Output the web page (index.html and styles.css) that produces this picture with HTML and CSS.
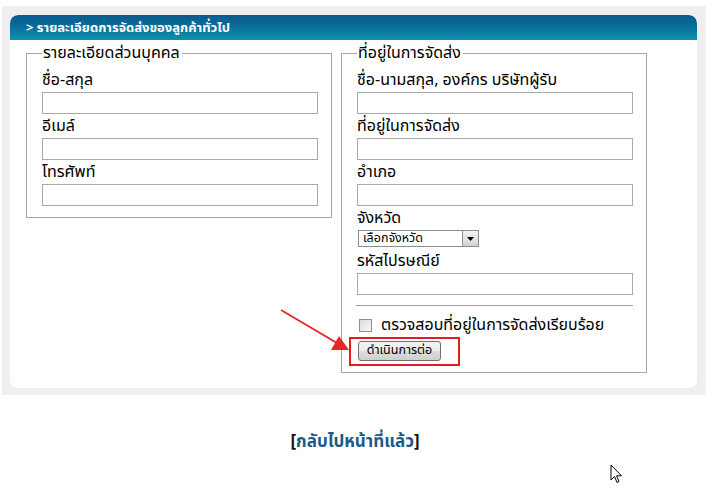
FILE: index.html
```html
<!DOCTYPE html>
<html lang="th">
<head>
<meta charset="utf-8">
<title>รายละเอียดการจัดส่ง</title>
<link rel="stylesheet" href="styles.css">
</head>
<body>
<div class="outer">
  <div class="panel">
    <div class="panel-head">&gt; รายละเอียดการจัดส่งของลูกค้าทั่วไป</div>
    <div class="panel-body">
      <fieldset class="box">
        <legend>รายละเอียดส่วนบุคคล</legend>
        <label class="lbl">ชื่อ-สกุล</label>
        <input class="txt" type="text">
        <label class="lbl">อีเมล์</label>
        <input class="txt" type="text">
        <label class="lbl">โทรศัพท์</label>
        <input class="txt" type="text">
      </fieldset>
      <fieldset class="box box-right">
        <legend>ที่อยู่ในการจัดส่ง</legend>
        <label class="lbl">ชื่อ-นามสกุล, องค์กร บริษัทผู้รับ</label>
        <input class="txt" type="text">
        <label class="lbl">ที่อยู่ในการจัดส่ง</label>
        <input class="txt" type="text">
        <label class="lbl">อำเภอ</label>
        <input class="txt" type="text">
        <label class="lbl">จังหวัด</label>
        <div class="select">
          <span class="select-text">เลือกจังหวัด</span>
          <span class="select-btn"><svg width="7" height="4" viewBox="0 0 7 4"><path d="M0 0H7L3.5 4Z" fill="#000"/></svg></span>
        </div>
        <label class="lbl">รหัสไปรษณีย์</label>
        <input class="txt" type="text">
        <div class="rule"></div>
        <div class="check-row">
          <span class="check"></span>
          <span class="check-text">ตรวจสอบที่อยู่ในการจัดส่งเรียบร้อย</span>
        </div>
        <div class="highlight"><span class="btn">ดำเนินการต่อ</span></div>
      </fieldset>
    </div>
  </div>
</div>
<div class="back"><span class="bracket">[</span>กลับไปหน้าที่แล้ว<span class="bracket">]</span></div>
<svg class="arrow" width="80" height="50" viewBox="0 0 80 50">
  <line x1="2" y1="2" x2="58" y2="35" stroke="#e8262a" stroke-width="2"/>
  <path d="M70 42 L52 42 L60 28 Z" fill="#e8262a"/>
</svg>
<svg class="cursor" width="13" height="21" viewBox="0 0 13 21">
  <path d="M1 1 L1 16 L4.5 12.5 L7 18.5 L9 17.6 L6.6 11.8 L11.5 11.8 Z" fill="#fff" stroke="#000" stroke-width="1" stroke-linejoin="round"/>
</svg>
</body>
</html>
```
FILE: styles.css
```css
html, body {
  margin: 0;
  padding: 0;
  background: #ffffff;
  font-family: Tahoma, "Noto Sans Thai", "Noto Sans", "DejaVu Sans", sans-serif;
  color: #000;
}
body {
  position: relative;
  width: 710px;
  height: 503px;
  overflow: hidden;
}
.outer {
  margin: 6px 4px 0 2px;
  padding: 9px 9px 7px 8px;
  background: #efefef;
}
.panel {
  background: #ffffff;
  border-radius: 8px;
  overflow: hidden;
}
.panel-head {
  height: 25px;
  line-height: 26px;
  padding-left: 16px;
  color: #ffffff;
  font-size: 13px;
  font-weight: bold;
  background: linear-gradient(#0a5b8d 0%, #0b6f9c 50%, #0f92ae 100%);
  border-radius: 8px 8px 0 0;
}
.panel-body {
  display: flex;
  align-items: flex-start;
  gap: 9px;
  padding: 4px 16px 15px 16px;
}
.box {
  width: 306px;
  box-sizing: border-box;
  margin: 0;
  padding: 0 14px 6px 15px;
  border: 1px solid #a6a6a6;
  min-width: 0;
}
.box:first-child {
  padding-bottom: 11px;
}
.box legend {
  font-size: 16px;
  padding: 0 2px 0 1px;
  line-height: 19px;
}
.lbl {
  display: block;
  font-size: 16px;
  line-height: 20px;
  margin-top: 2px;
  margin-bottom: 2px;
}
.box legend + .lbl {
  margin-top: 7px;
}
.txt {
  display: block;
  box-sizing: border-box;
  width: 276px;
  height: 22px;
  margin: 0;
  padding: 0;
  border: 1px solid #a9a9a9;
  background: #fff;
}
.select {
  display: flex;
  width: 121px;
  height: 17px;
  box-sizing: border-box;
  border: 1px solid #8e8e8e;
  margin: 1px 0 4px 1px;
  background: #fff;
}
.select-text {
  flex: 1;
  font-size: 12.5px;
  line-height: 15px;
  padding-left: 4px;
}
.select-btn {
  width: 15px;
  display: flex;
  align-items: center;
  justify-content: center;
  border-left: 1px solid #8e8e8e;
  background: linear-gradient(#f4f4f4, #d3d3d3);
}
.rule {
  height: 1px;
  background: #a0a0a0;
  margin: 10px -1px 0 -1px;
}
.check-row {
  display: flex;
  align-items: center;
  margin-top: 9px;
  height: 20px;
}
.check {
  width: 13px;
  height: 13px;
  box-sizing: border-box;
  margin-left: 2px;
  border: 1px solid #8f8f8f;
  background: linear-gradient(135deg, #dcdcdc, #f6f6f6);
}
.check-text {
  font-size: 16px;
  margin-left: 9px;
}
.highlight {
  display: block;
  width: max-content;
  margin-left: -8px;
  margin-top: 2px;
  padding: 2px 17px 3px 7px;
  border: 2px solid #e31b23;
}
.btn {
  display: block;
  width: 83px;
  height: 20px;
  box-sizing: border-box;
  border: 1px solid #707070;
  border-radius: 3px;
  background: linear-gradient(#f2f2f2 0%, #ebebeb 50%, #dddddd 51%, #cfcfcf 100%);
  font-size: 12.5px;
  line-height: 18px;
  text-align: center;
}
.back {
  margin-top: 34px;
  text-align: center;
  font-size: 17px;
  font-weight: bold;
  color: #1a5b8c;
}
.bracket {
  color: #111;
}
.arrow {
  position: absolute;
  left: 279px;
  top: 308px;
}
.cursor {
  position: absolute;
  left: 610px;
  top: 464px;
}
```
